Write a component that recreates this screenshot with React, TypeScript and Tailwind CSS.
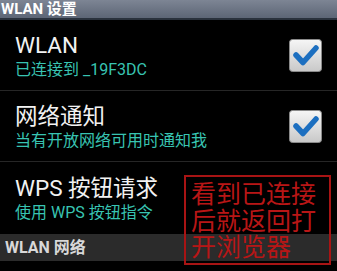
import React from "react";

const font = { fontFamily: '"Roboto", "Noto Sans CJK SC", sans-serif' };

function Check() {
  return (
    <svg width="33" height="33" viewBox="0 0 33 33">
      <defs>
        <linearGradient id="cb" x1="0" y1="0" x2="0" y2="1">
          <stop offset="0" stopColor="#f6f6f6" />
          <stop offset="1" stopColor="#c8c8c8" />
        </linearGradient>
      </defs>
      <rect x="0.5" y="0.5" width="32" height="32" rx="3" fill="url(#cb)" stroke="#8a8a8a" />
      <path d="M7 16 L14 23.5 L27 9" fill="none" stroke="#1c6fc0" strokeWidth="5.5" strokeLinecap="round" strokeLinejoin="round" />
    </svg>
  );
}

function Row({ title, sub, checked }: { title: string; sub: string; checked?: boolean }) {
  return (
    <div className="flex h-[71px] items-center justify-between border-b border-[#262626] pl-[15px] pr-[15px]">
      <div className="flex flex-col">
        <span className="text-[22.5px] leading-[26px] text-[#f2f2f2]">{title}</span>
        <span className="mt-[2px] text-[16px] leading-[19px] text-[#38c4b2]">{sub}</span>
      </div>
      {checked && <Check />}
    </div>
  );
}

export default function App() {
  return (
    <div className="relative h-[271px] w-[337px] overflow-hidden bg-black" style={font}>
      {/* title bar */}
      <div className="h-[18px] bg-gradient-to-b from-[#7d8594] to-[#5d6676] pl-[1px] text-[15px] font-bold leading-[18px] text-white">
        WLAN 设置
      </div>
      <div className="h-[2px] bg-[#2a323d]" />

      <Row title="WLAN" sub="已连接到 _19F3DC" checked />
      <Row title="网络通知" sub="当有开放网络可用时通知我" checked />
      <div className="flex h-[72px] items-center pl-[15px]">
        <div className="flex flex-col">
          <span className="text-[22.5px] leading-[26px] text-[#f2f2f2]">WPS 按钮请求</span>
          <span className="mt-[2px] text-[16px] leading-[19px] text-[#38c4b2]">使用 WPS 按钮指令</span>
        </div>
      </div>

      {/* section header */}
      <div className="h-[27px] bg-[#2b2b2b] pl-[5px] text-[16px] font-bold leading-[27px] text-[#d8d8d8]">
        WLAN 网络
      </div>

      {/* annotation */}
      <div className="absolute left-[184px] top-[175px] h-[90px] w-[147px] border-2 border-[#a81414] pl-[5px] pt-[5px]">
        <div className="text-[25px] leading-[26.5px] text-[#b81616]">
          看到已连接
          <br />
          后就返回打
          <br />
          开浏览器
        </div>
      </div>
    </div>
  );
}
